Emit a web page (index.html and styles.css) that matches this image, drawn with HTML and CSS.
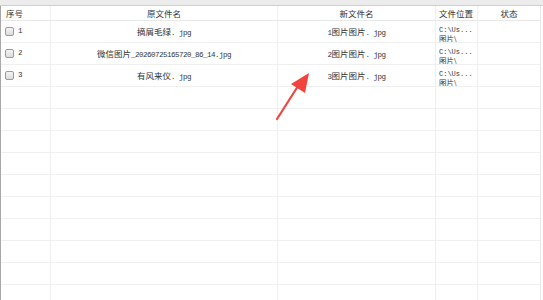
FILE: index.html
```html
<!DOCTYPE html>
<html>
<head>
	<meta charset="utf-8">
	<title>文件重命名</title>
	<link rel="stylesheet" href="styles.css">
</head>
<body>
	<div class="top_bar"></div>
	<div class="grid_box">
		<div class="row head">
			<div class="c1">序号</div>
			<div class="c2">原文件名</div>
			<div class="c3">新文件名</div>
			<div class="c4">文件位置</div>
			<div class="c5">状态</div>
		</div>
		<div class="row">
			<div class="c1"><span class="chk"></span><span class="num">1</span></div>
			<div class="c2">摘屑毛绿<span class="lat">. jpg</span></div>
			<div class="c3"><span class="lat">1</span>图片图片<span class="lat">. jpg</span></div>
			<div class="c4 path"><span class="lat">C:\Us...</span><br>图片\</div>
			<div class="c5"></div>
		</div>
		<div class="row">
			<div class="c1"><span class="chk"></span><span class="num">2</span></div>
			<div class="c2">微信图片<span class="lat">_20260725165720_86_14.jpg</span></div>
			<div class="c3"><span class="lat">2</span>图片图片<span class="lat">. jpg</span></div>
			<div class="c4 path"><span class="lat">C:\Us...</span><br>图片\</div>
			<div class="c5"></div>
		</div>
		<div class="row">
			<div class="c1"><span class="chk"></span><span class="num">3</span></div>
			<div class="c2">有风来仪<span class="lat">. jpg</span></div>
			<div class="c3"><span class="lat">3</span>图片图片<span class="lat">. jpg</span></div>
			<div class="c4 path"><span class="lat">C:\Us...</span><br>图片\</div>
			<div class="c5"></div>
		</div>
		<div class="row"><div class="c1"></div><div class="c2"></div><div class="c3"></div><div class="c4"></div><div class="c5"></div></div>
		<div class="row"><div class="c1"></div><div class="c2"></div><div class="c3"></div><div class="c4"></div><div class="c5"></div></div>
		<div class="row"><div class="c1"></div><div class="c2"></div><div class="c3"></div><div class="c4"></div><div class="c5"></div></div>
		<div class="row"><div class="c1"></div><div class="c2"></div><div class="c3"></div><div class="c4"></div><div class="c5"></div></div>
		<div class="row"><div class="c1"></div><div class="c2"></div><div class="c3"></div><div class="c4"></div><div class="c5"></div></div>
		<div class="row"><div class="c1"></div><div class="c2"></div><div class="c3"></div><div class="c4"></div><div class="c5"></div></div>
		<div class="row"><div class="c1"></div><div class="c2"></div><div class="c3"></div><div class="c4"></div><div class="c5"></div></div>
		<div class="row"><div class="c1"></div><div class="c2"></div><div class="c3"></div><div class="c4"></div><div class="c5"></div></div>
		<div class="row"><div class="c1"></div><div class="c2"></div><div class="c3"></div><div class="c4"></div><div class="c5"></div></div>
		<div class="row"><div class="c1"></div><div class="c2"></div><div class="c3"></div><div class="c4"></div><div class="c5"></div></div>
	</div>

	<!-- 红色箭头 -->
	<svg class="arrow" width="543" height="300" viewBox="0 0 543 300">
		<line x1="277" y1="119" x2="300" y2="83" stroke="#f2443f" stroke-width="2.2" stroke-linecap="round"/>
		<polygon points="309,73 291,84 305,93" fill="#f2443f"/>
	</svg>
</body>
</html>
```

FILE: styles.css
```css
*{margin: 0; padding: 0; box-sizing: border-box;}
body{width: 543px; height: 300px; overflow: hidden; background: #fff;
	font-family: "Noto Sans CJK SC", sans-serif; font-size: 8.5px; color: #333;}
.top_bar{height: 6px; background: #ececec; border-bottom: 1px solid #cfcfcf;}
.grid_box{width: 541px; border-left: 1px solid #a8a8a8; border-right: 1px solid #e6e6e6;}
.row{display: flex; height: 22px; border-bottom: 1px solid #f0f0f0;}
.row.head{height: 15px; border-bottom-color: #e8e8e8;}
.row > div{border-right: 1px solid #efefef; line-height: 21px; text-align: center;
	white-space: nowrap; overflow: hidden;}
.head > div{line-height: 14px;}
.row > div:last-child{border-right: none;}
.c1{width: 50px;}
.c2{width: 227px;}
.c3{width: 158px;}
.c4{width: 42px;}
.c5{flex: 1;}
.row .c1{display: flex; align-items: center; padding-left: 4px;}
.head .c1{padding-left: 5px;}
.head .c4{text-align: left; padding-left: 3px;}
.lat{font-family: "Liberation Mono", monospace; font-size: 7.5px; letter-spacing: -0.5px;}
.chk{width: 9px; height: 9px; border: 1px solid #9a9a9a; border-radius: 2px;
	background: linear-gradient(#f4f4f4, #dcdcdc); margin-right: 4px;}
.num{font-family: "Liberation Mono", monospace; font-size: 7.5px;}
.row .path{padding: 4px 0 0 3px; line-height: 7.5px; font-size: 7.5px; text-align: left;}
.path .lat{font-size: 7px; letter-spacing: 0;}
.arrow{position: absolute; left: 0; top: 0; pointer-events: none;}
```
